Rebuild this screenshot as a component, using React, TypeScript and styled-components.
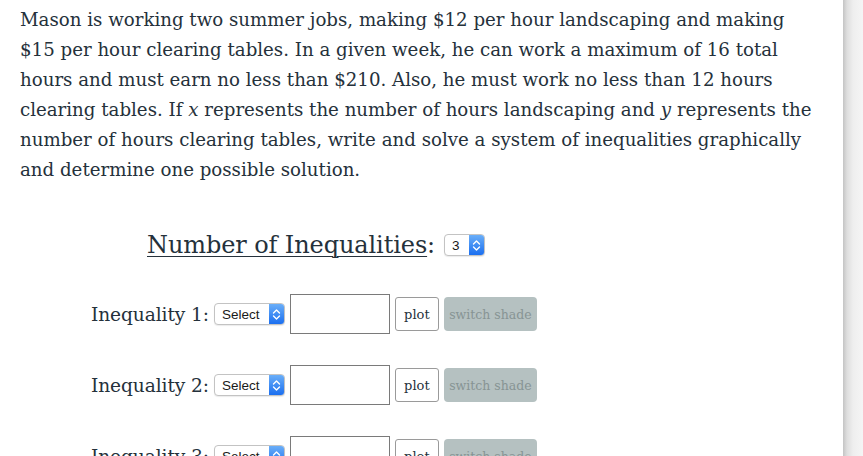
import styled, { createGlobalStyle } from "styled-components";

const GlobalStyle = createGlobalStyle`
  html, body {
    margin: 0;
    padding: 0;
    background: #ffffff;
  }
  body {
    font-family: "DejaVu Serif", Georgia, serif;
    color: #25313b;
    overflow: hidden;
  }
`;

const Page = styled.div`
  display: flex;
  width: 863px;
  height: 456px;
  overflow: hidden;
`;

const Panel = styled.main`
  width: 843px;
  flex-shrink: 0;
  background: #ffffff;
`;

const Gutter = styled.div`
  flex: 1;
  background: linear-gradient(to right, #c4c4c4 0px, #dedede 4px, #eeeeee 10px, #f5f5f5 20px);
`;

const Question = styled.p`
  margin: 0;
  padding: 5px 0 0 20px;
  font-size: 18.2px;
  line-height: 30px;
  white-space: nowrap;
`;

const MathVar = styled.i`
  font-family: "DejaVu Serif", serif;
  font-style: italic;
`;

const CountRow = styled.div`
  display: flex;
  align-items: center;
  gap: 9px;
  margin: 43px 0 0 147px;
  height: 34px;
`;

const CountLabel = styled.h2`
  margin: 0;
  font-size: 24px;
  font-weight: normal;
  letter-spacing: -0.1px;
`;

const Underlined = styled.span`
  text-decoration: underline;
  text-decoration-thickness: 1px;
  text-underline-offset: 3px;
`;

const SelectBox = styled.div<{ $width: number }>`
  position: relative;
  width: ${({ $width }) => $width}px;
  height: 22px;
  box-sizing: border-box;
  border: 1px solid #c3c3c3;
  border-radius: 4px;
  background: #ffffff;
  overflow: hidden;
  font-family: "Liberation Sans", Arial, sans-serif;
  font-size: 13.5px;
  color: #1a1a1a;
  display: flex;
  align-items: center;
  padding-left: 7px;
  box-shadow: 0 1px 1px rgba(0, 0, 0, 0.08);
`;

const SelectArrow = styled.span`
  position: absolute;
  top: 0;
  right: 0;
  bottom: 0;
  width: 15px;
  background: linear-gradient(to bottom, #6aaef8, #1b6ff0);
  display: flex;
  align-items: center;
  justify-content: center;
`;

const Rows = styled.div`
  display: flex;
  flex-direction: column;
  gap: 31px;
  margin: 32px 0 0 91px;
`;

const Row = styled.div`
  display: flex;
  align-items: center;
  height: 40px;
`;

const RowLabel = styled.span`
  font-size: 18.6px;
  margin-right: 5px;
  letter-spacing: -0.1px;
`;

const TextBox = styled.input`
  width: 100px;
  height: 40px;
  box-sizing: border-box;
  margin: 0 5px;
  border: 1px solid #7a7a7a;
  border-radius: 0;
  padding: 0 4px;
  font-size: 14px;
`;

const PlotButton = styled.button`
  height: 34px;
  width: 44px;
  box-sizing: border-box;
  border: 1px solid #9a9a9a;
  border-radius: 3px;
  background: #ffffff;
  font-family: "DejaVu Serif", Georgia, serif;
  font-size: 13px;
  color: #25313b;
  padding: 0;
  margin-right: 5px;
`;

const ShadeButton = styled.button`
  height: 34px;
  width: 93px;
  border: 0;
  border-radius: 4px;
  background: #b5c1c1;
  font-family: "DejaVu Serif", Georgia, serif;
  font-size: 12.5px;
  color: #879494;
  padding: 0;
`;

const Chevrons = () => (
  <svg width="9" height="13" viewBox="0 0 9 13" fill="none">
    <path d="M1.5 5 L4.5 2 L7.5 5" stroke="#ffffff" strokeWidth="1.4" strokeLinecap="round" strokeLinejoin="round" />
    <path d="M1.5 8 L4.5 11 L7.5 8" stroke="#ffffff" strokeWidth="1.4" strokeLinecap="round" strokeLinejoin="round" />
  </svg>
);

const FakeSelect = ({ value, width }: { value: string; width: number }) => (
  <SelectBox $width={width}>
    {value}
    <SelectArrow>
      <Chevrons />
    </SelectArrow>
  </SelectBox>
);

const lines = [
  "Mason is working two summer jobs, making $12 per hour landscaping and making",
  "$15 per hour clearing tables. In a given week, he can work a maximum of 16 total",
  "hours and must earn no less than $210. Also, he must work no less than 12 hours",
];

export default function App() {
  return (
    <>
      <GlobalStyle />
      <Page>
        <Panel>
          <Question>
            {lines.map((l) => (
              <span key={l}>
                {l}
                <br />
              </span>
            ))}
            clearing tables. If <MathVar>x</MathVar> represents the number of hours landscaping and{" "}
            <MathVar>y</MathVar> represents the
            <br />
            number of hours clearing tables, write and solve a system of inequalities graphically
            <br />
            and determine one possible solution.
          </Question>
          <CountRow>
            <CountLabel>
              <Underlined>Number of Inequalities</Underlined>:
            </CountLabel>
            <FakeSelect value="3" width={41} />
          </CountRow>
          <Rows>
            {[1, 2, 3].map((n) => (
              <Row key={n}>
                <RowLabel>Inequality {n}:</RowLabel>
                <FakeSelect value="Select" width={71} />
                <TextBox type="text" />
                <PlotButton>plot</PlotButton>
                <ShadeButton>switch shade</ShadeButton>
              </Row>
            ))}
          </Rows>
        </Panel>
        <Gutter />
      </Page>
    </>
  );
}
